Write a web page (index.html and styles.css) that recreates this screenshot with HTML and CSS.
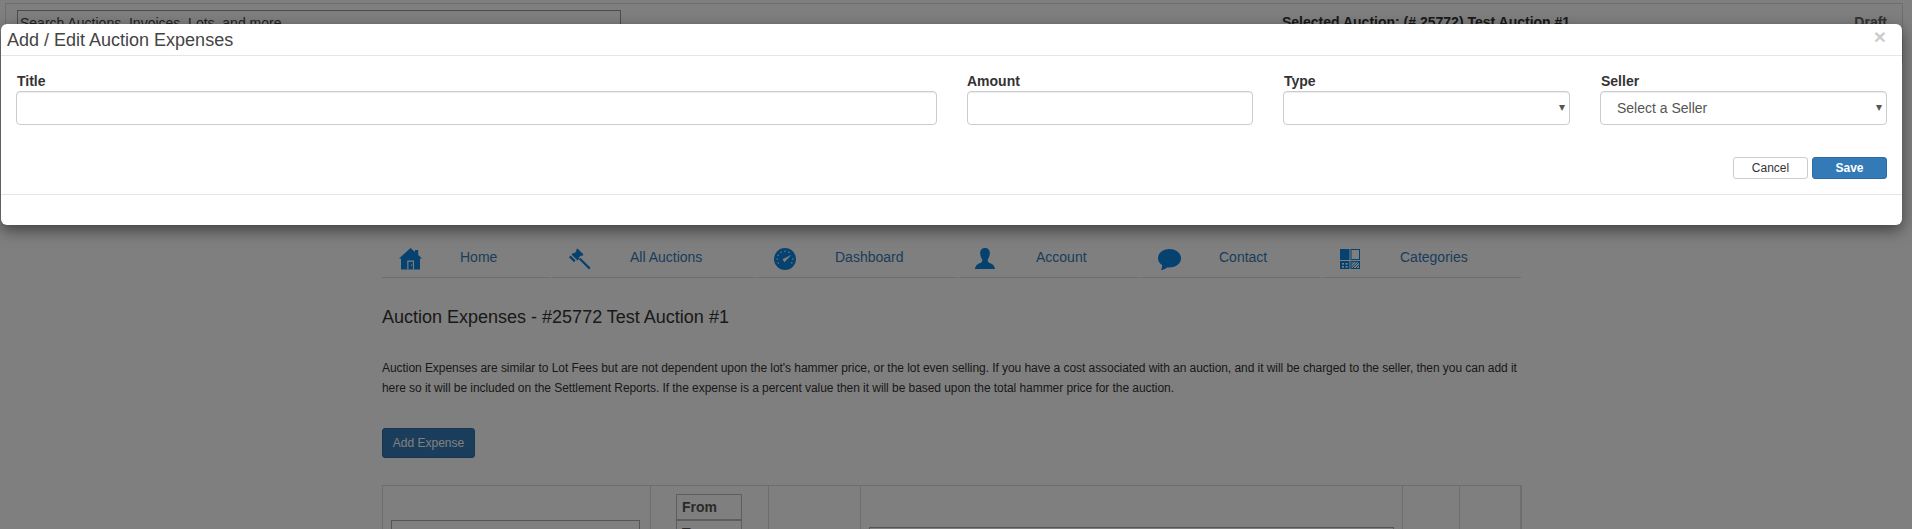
FILE: index.html
```html
<!DOCTYPE html>
<html lang="en">
<head>
<meta charset="utf-8">
<title>Auction Expenses</title>
<link rel="stylesheet" href="styles.css">
</head>
<body>
<div class="page">
  <header class="topbar">
    <input class="search" type="text" placeholder="Search Auctions, Invoices, Lots, and more">
    <div class="selected">Selected Auction: (# 25772) Test Auction #1</div>
    <div class="status">Draft</div>
  </header>

  <main class="content">
    <nav class="nav">
      <a class="nav-item nav-home" href="#">
        <span class="nav-icon">
          <svg width="23" height="22" viewBox="0 0 23 22"><path class="ic" d="M11.5 0 L16 4 L16 2 L19.2 2 L19.2 7 L23 10.6 L21 10.6 L21 21.5 L2 21.5 L2 10.6 L0 10.6 Z"/><path class="ic-cut" d="M8.3 12.6 H15 V21.5 H13.9 V13.8 H9.4 V21.5 H8.3 Z"/><rect class="ic-cut" x="12.1" y="16.4" width="1" height="1.4"/></svg>
        </span>
        <span>Home</span>
      </a>
      <a class="nav-item nav-auctions" href="#">
        <span class="nav-icon">
          <svg width="22" height="22" viewBox="0 0 22 22"><path class="ic" d="M8.5 0.5 L14.5 6.5 L12.8 8.2 L12 7.4 L9.4 10 L10.2 10.8 L8.5 12.5 L2.5 6.5 L4.2 4.8 L5 5.6 L7.6 3 L6.8 2.2 Z"/><path class="ic" d="M0 9.2 L1.6 7.6 L6.6 12.6 L5 14.2 Z"/><path class="ic" d="M11.3 9.8 L21.6 19.8 L20 21.6 L9.8 11.3 Z"/></svg>
        </span>
        <span>All Auctions</span>
      </a>
      <a class="nav-item nav-dash" href="#">
        <span class="nav-icon">
          <svg width="22" height="22" viewBox="0 0 22 22"><circle class="ic" cx="11" cy="11" r="11"/><path class="ic-cut" d="M8.6 11.2 L17.4 6.8 L10.4 14.2 Z"/><g class="ic-tick"><circle cx="11" cy="3.2" r=".7"/><circle cx="7" cy="4.3" r=".7"/><circle cx="4.2" cy="7.2" r=".7"/><circle cx="3.2" cy="11" r=".7"/><circle cx="4.2" cy="15" r=".7"/><circle cx="15" cy="4.3" r=".7"/><circle cx="18.8" cy="11" r=".7"/><circle cx="17.8" cy="15" r=".7"/></g></svg>
        </span>
        <span>Dashboard</span>
      </a>
      <a class="nav-item nav-account" href="#">
        <span class="nav-icon">
          <svg width="20" height="21" viewBox="0 0 20 21"><path class="ic" d="M10 0 C13.5 0 15 2.6 14.8 5.6 C14.6 8.4 13.6 10.4 12.8 11.6 C12.6 13 13 14 14.6 15 C17 16 19.4 16.8 20 21 L0 21 C0.6 16.8 3 16 5.4 15 C7 14 7.4 13 7.2 11.6 C6.4 10.4 5.4 8.4 5.2 5.6 C5 2.6 6.5 0 10 0 Z"/></svg>
        </span>
        <span>Account</span>
      </a>
      <a class="nav-item nav-contact" href="#">
        <span class="nav-icon">
          <svg width="23" height="21" viewBox="0 0 23 21"><path class="ic" d="M11.5 0 C18 0 23 4 23 9.2 C23 14.4 18 18.4 11.5 18.4 C10.8 18.4 10.2 18.4 9.6 18.2 C7.8 19.6 5.8 20.6 3 21 C3.8 19.6 4.2 18 4.2 16.2 C1.6 14.6 0 12 0 9.2 C0 4 5 0 11.5 0 Z"/></svg>
        </span>
        <span>Contact</span>
      </a>
      <a class="nav-item nav-cats" href="#">
        <span class="nav-icon">
          <svg width="20" height="20" viewBox="0 0 20 20"><rect class="ic" x="0" y="0" width="9.5" height="11"/><rect class="ic-line" x="11" y=".5" width="8.5" height="10"/><rect class="ic" x="0" y="12" width="9.5" height="8"/><g class="ic-tick"><rect x="2" y="14" width="2" height="1.6"/><rect x="5.6" y="14" width="2" height="1.6"/><rect x="2" y="17" width="2" height="1.6"/><rect x="5.6" y="17" width="2" height="1.6"/></g><rect class="ic-line" x="11" y="12.5" width="8.5" height="7"/><path class="ic-hatch" d="M11 15.5 L14 12.5 M11 18.5 L17 12.5 M12.5 19.5 L19.5 12.5 M15.5 19.5 L19.5 15.5"/></svg>
        </span>
        <span>Categories</span>
      </a>
    </nav>

    <h1 class="page-title">Auction Expenses - #25772 Test Auction #1</h1>

    <p class="intro">Auction Expenses are similar to Lot Fees but are not dependent upon the lot's hammer price, or the lot even selling. If you have a cost associated with an auction, and it will be charged to the seller, then you can add it here so it will be included on the Settlement Reports. If the expense is a percent value then it will be based upon the total hammer price for the auction.</p>

    <button class="btn-add" type="button">Add Expense</button>

    <div class="grid-table">
      <div class="cell cell-title"><input class="cell-input" type="text"></div>
      <div class="cell cell-range">
        <div class="range-box">From</div>
        <div class="range-box">To</div>
      </div>
      <div class="cell"></div>
      <div class="cell cell-desc"><input class="cell-input" type="text"></div>
      <div class="cell"></div>
      <div class="cell"></div>
    </div>
  </main>

  <div class="backdrop"></div>

  <section class="modal">
    <div class="modal-header">
      <h2 class="modal-title">Add / Edit Auction Expenses</h2>
      <span class="close">×</span>
    </div>
    <div class="modal-body">
      <div class="fields">
        <div class="field">
          <label class="field-label">Title</label>
          <input class="control" type="text">
        </div>
        <div class="field field-amount">
          <label class="field-label">Amount</label>
          <input class="control" type="text">
        </div>
        <div class="field field-pick">
          <label class="field-label">Type</label>
          <div class="select-wrap"><select class="control select"><option></option></select></div>
        </div>
        <div class="field field-pick">
          <label class="field-label">Seller</label>
          <div class="select-wrap"><select class="control select"><option>Select a Seller</option></select></div>
        </div>
      </div>
      <div class="actions">
        <button class="btn btn-cancel" type="button">Cancel</button>
        <button class="btn btn-save" type="button">Save</button>
      </div>
    </div>
    <div class="modal-footer"></div>
  </section>
</div>
</body>
</html>
```

FILE: styles.css
```css
* { box-sizing: border-box; }

html, body {
  margin: 0;
  padding: 0;
  background: #fff;
}

body {
  font-family: "Liberation Sans", Arial, sans-serif;
  font-size: 14px;
  color: #333;
}

.page {
  position: relative;
  height: 529px;
  overflow: hidden;
  background: #fff;
}

/* page behind the dialog */
.topbar {
  display: flex;
  align-items: flex-start;
  height: 60px;
  margin: 3px 9px 0 5px;
  padding: 6px 15px 0 11px;
  border: 1px solid #ddd;
}

.search {
  width: 604px;
  height: 26px;
  padding: 1px 2px;
  border: 1px solid #999;
  background: #fff;
  font: 14px "Liberation Sans", Arial, sans-serif;
}

.search::placeholder { color: #444; opacity: 1; }

.selected {
  margin-left: 661px;
  width: 287px;
  font-weight: 700;
  line-height: 20px;
  padding-top: 2px;
  white-space: nowrap;
  color: #333;
}

.status {
  margin-left: auto;
  font-weight: 700;
  line-height: 20px;
  padding-top: 2px;
  color: #666;
}

.content {
  width: 1140px;
  margin: 0 0 0 382px;
  padding-top: 182px;
}

.nav {
  display: grid;
  grid-template-columns: 170px 205px 202px 182px 181px 200px;
  height: 33px;
}

.nav-item {
  display: flex;
  align-items: flex-start;
  height: 33px;
  margin-right: 1px;
  border-bottom: 1px solid #ddd;
  color: #337ab7;
  text-decoration: none;
  line-height: 24px;
}

.nav-icon {
  display: flex;
  justify-content: center;
  flex: 0 0 78px;
  padding-right: 22px;
  padding-top: 3px;
}

.nav-icon svg { display: block; }

.nav-account .nav-icon { padding-right: 26px; flex-basis: 77px; }
.nav-contact .nav-icon,
.nav-cats .nav-icon { padding-top: 4px; }

.ic { fill: #0a84e0; }
.ic-cut { fill: #fff; }
.ic-tick { fill: #fff; }
.ic-line { fill: #fff; stroke: #0a84e0; stroke-width: 1; }
.ic-hatch { fill: none; stroke: #0a84e0; stroke-width: 1; }

.page-title {
  margin: 29px 0 0;
  font-size: 18px;
  font-weight: 400;
  line-height: 20px;
  color: #333;
}

.intro {
  margin: 31px 0 0;
  font-size: 12px;
  line-height: 20px;
  letter-spacing: -.055px;
  color: #333;
}

.btn-add {
  display: block;
  width: 93px;
  height: 30px;
  margin: 30px 0 0;
  padding: 0;
  border: 1px solid #2e6da4;
  border-radius: 3px;
  background: #337ab7;
  color: #fff;
  font: 12px "Liberation Sans", Arial, sans-serif;
}

.grid-table {
  display: grid;
  grid-template-columns: 267px 118px 92px 542px 57px 61px;
  height: 140px;
  margin-top: 27px;
  border: 1px solid #ddd;
  border-right-width: 2px;
}

.cell { border-left: 1px solid #ddd; }
.cell:first-child { border-left: 0; }

.cell-title { padding: 34px 10px 0 8px; }
.cell-desc { padding: 41px 8px 0 8px; }
.cell-range { padding: 8px 26px 0 25px; }

.cell-input {
  display: block;
  width: 100%;
  height: 34px;
  border: 1px solid #aaa;
  background: #fff;
}

.range-box {
  height: 26px;
  padding: 2px 5px;
  border: 1px solid #bbb;
  font-weight: 700;
  line-height: 20px;
  color: #555;
}

/* dialog */
.backdrop {
  position: absolute;
  inset: 0;
  background: rgba(0, 0, 0, .5);
}

.modal {
  position: absolute;
  top: 24px;
  left: 1px;
  width: 1901px;
  height: 201px;
  background: #fff;
  border-radius: 6px;
  box-shadow: 0 5px 15px rgba(0, 0, 0, .5);
}

.modal-header {
  display: flex;
  justify-content: space-between;
  height: 32px;
  padding: 6px 16px 0 6px;
  border-bottom: 1px solid #e5e5e5;
}

.modal-title {
  margin: 0;
  font-size: 18px;
  font-weight: 400;
  line-height: 20px;
  color: #444;
}

.close {
  font-size: 21px;
  font-weight: 700;
  line-height: 14px;
  color: #000;
  opacity: .2;
}

.modal-body { padding: 15px; }

.fields {
  display: grid;
  grid-template-columns: 921px 316px 317px 317px;
}

.field-amount,
.field-pick { padding-left: 30px; }

.field-label {
  display: block;
  height: 20px;
  padding-left: 1px;
  font-weight: 700;
  line-height: 20px;
  color: #333;
}

.field-amount .field-label { padding-left: 0; }

.control {
  display: block;
  width: 100%;
  height: 34px;
  padding: 6px 12px;
  border: 1px solid #ccc;
  border-radius: 4px;
  background: #fff;
  box-shadow: inset 0 1px 1px rgba(0, 0, 0, .075);
  font: 14px "Liberation Sans", Arial, sans-serif;
  color: #555;
}

.select-wrap { position: relative; }

.select-wrap::after {
  content: "▾";
  position: absolute;
  top: 7px;
  right: 5px;
  font: 12px/18px "DejaVu Sans", sans-serif;
  color: #555;
  pointer-events: none;
}

.select {
  appearance: none;
  -webkit-appearance: none;
  padding-left: 16px;
}

.actions {
  display: flex;
  justify-content: flex-end;
  gap: 4px;
  margin-top: 32px;
}

.btn {
  width: 75px;
  height: 22px;
  padding: 0;
  border: 1px solid #ccc;
  border-radius: 3px;
  font: 12px "Liberation Sans", Arial, sans-serif;
}

.btn-cancel { background: #fff; color: #333; }
.btn-save { background: #337ab7; border-color: #2e6da4; color: #fff; font-weight: 700; }

.modal-footer {
  height: 31px;
  border-top: 1px solid #e5e5e5;
}
```
